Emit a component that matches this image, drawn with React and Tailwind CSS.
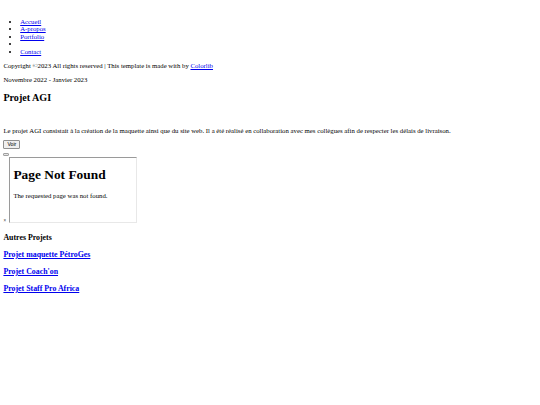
import React from 'react';

const navLinks = ['Accueil', 'A-propos', 'Portfolio', '', 'Contact'];
const otherProjects = ['Projet maquette PétroGes', "Projet Coach'on", 'Projet Staff Pro Africa'];

const App = () => (
  <div className="min-h-[405px] bg-white px-[3.4px] pt-[17.5px] font-['Liberation_Serif',serif] text-[6.75px] leading-[7.5px] text-black">
    <ul className="list-disc pl-[16.8px]">
      {navLinks.map((label, i) => (
        <li key={i} className="h-[7.5px]">
          {label && (
            <a href="#" className="text-[#0000ee] underline">
              {label}
            </a>
          )}
        </li>
      ))}
    </ul>

    <p className="mt-[7px]">
      Copyright ©2023 All rights reserved | This template is made with by{' '}
      <a href="#" className="text-[#0000ee] underline">Colorlib</a>
    </p>
    <p className="mt-[6.75px]">Novembre 2022 - Janvier 2023</p>

    <h2 className="mt-[8.4px] text-[10.1px] font-bold leading-[11.6px]">Projet AGI</h2>

    <p className="mt-[23.25px]">
      Le projet AGI consistait à la création de la maquette ainsi que du site web. Il a été réalisé en collaboration avec mes collègues afin de respecter les délais de livraison.
    </p>

    <button className="mt-[6px] block rounded-[1px] border border-[#8f8f8f] bg-[#efefef] px-[3px] font-['Liberation_Sans',sans-serif] text-[5.2px] leading-[7px] text-black">
      Voir
    </button>

    <div className="mt-[4px] h-[3px] w-[6px] rounded-[1px] border border-[#a0a0a0] bg-[#e6e6e6]" />

    <div className="mt-[1px] flex items-end">
      <span className="w-[5.6px] font-['Liberation_Sans',sans-serif] text-[4.5px] leading-[4px] text-[#444]">×</span>
      <div className="h-[66px] w-[128px] border-t border-l border-t-[#9a9a9a] border-l-[#9a9a9a] border-r border-b border-r-[#e8e8e8] border-b-[#e8e8e8] px-[3.4px] pt-[9px]">
        <h1 className="text-[13.4px] font-bold leading-[15.4px]">Page Not Found</h1>
        <p className="mt-[9px]">The requested page was not found.</p>
      </div>
    </div>

    <h3 className="mt-[9.5px] text-[7.86px] font-bold leading-[9px]">Autres Projets</h3>
    {otherProjects.map(name => (
      <h3 key={name} className="mt-[8px] text-[7.86px] font-bold leading-[9px]">
        <a href="#" className="text-[#0000ee] underline">{name}</a>
      </h3>
    ))}
  </div>
);

export default App;
